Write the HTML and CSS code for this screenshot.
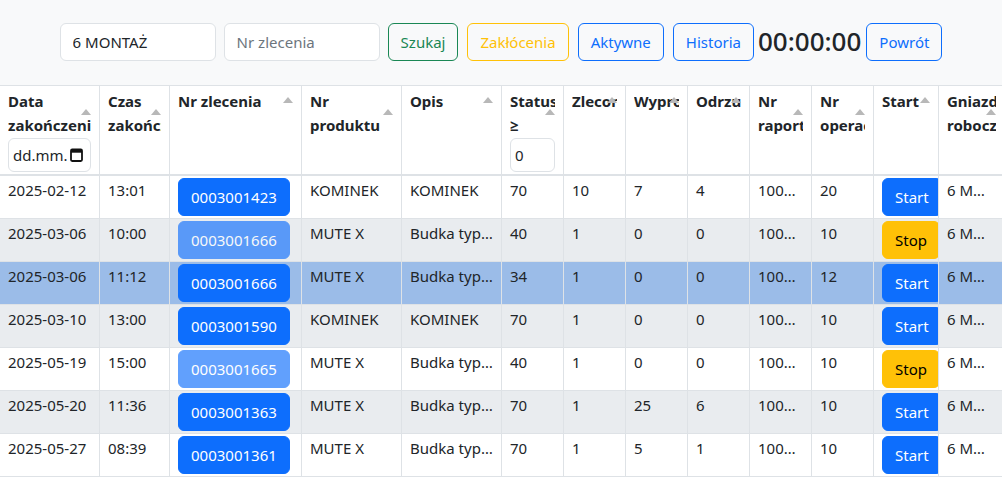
FILE: index.html
```html
<!DOCTYPE html>
<html lang="pl">
<head>
<meta charset="utf-8">
<title>Zlecenia</title>
<link rel="stylesheet" href="styles.css">
</head>
<body>
<div class="toolbar">
  <input class="field" type="text" value="6 MONTAŻ">
  <input class="field" type="text" placeholder="Nr zlecenia">
  <button class="btn btn-outline-success">Szukaj</button>
  <button class="btn btn-outline-warning">Zakłócenia</button>
  <button class="btn btn-outline-primary">Aktywne</button>
  <button class="btn btn-outline-primary">Historia</button>
  <h3 class="timer">00:00:00</h3>
  <button class="btn btn-outline-primary">Powrót</button>
</div>
<div class="table-wrap">
<table class="orders">
  <colgroup>
    <col class="w100"><col class="w70"><col class="w132"><col class="w100"><col class="w100">
    <col class="w62"><col class="w62"><col class="w62"><col class="w62"><col class="w62"><col class="w62">
    <col class="w65"><col class="w66">
  </colgroup>
  <thead>
    <tr>
      <th><div class="th-head"><div class="th-label">Data zakończenia</div><span class="sort"></span></div>
        <div class="hdr-input date-input"><span class="date-text">dd.mm.rrrr</span><svg class="cal" width="13" height="14" viewBox="0 0 13 14"><rect x="1" y="1.5" width="11" height="11.5" rx="1.2" fill="none" stroke="#111" stroke-width="1.8"/><rect x="1" y="1.5" width="11" height="3.2" fill="#111"/></svg></div></th>
      <th><div class="th-head"><div class="th-label">Czas zakończenia</div><span class="sort"></span></div></th>
      <th><div class="th-head"><div class="th-label">Nr zlecenia</div><span class="sort"></span></div></th>
      <th><div class="th-head"><div class="th-label">Nr produktu</div><span class="sort"></span></div></th>
      <th><div class="th-head"><div class="th-label">Opis</div><span class="sort"></span></div></th>
      <th><div class="th-head"><div class="th-label">Status ≥</div><span class="sort"></span></div>
        <input class="hdr-input" type="text" value="0"></th>
      <th><div class="th-head"><div class="th-label">Zlecone</div><span class="sort"></span></div></th>
      <th><div class="th-head"><div class="th-label">Wyprodukowane</div><span class="sort"></span></div></th>
      <th><div class="th-head"><div class="th-label">Odrzucone</div><span class="sort"></span></div></th>
      <th><div class="th-head"><div class="th-label">Nr raportu</div><span class="sort"></span></div></th>
      <th><div class="th-head"><div class="th-label">Nr operacji</div><span class="sort"></span></div></th>
      <th><div class="th-head"><div class="th-label">Start</div><span class="sort"></span></div></th>
      <th><div class="th-head"><div class="th-label">Gniazdo robocze</div><span class="sort"></span></div></th>
    </tr>
  </thead>
  <tbody>
    <tr>
      <td>2025-02-12</td><td>13:01</td><td><button class="tbtn tbtn-primary">0003001423</button></td>
      <td>KOMINEK</td><td>KOMINEK</td><td>70</td><td>10</td><td>7</td><td>4</td><td>1000234511</td><td>20</td>
      <td><button class="tbtn tbtn-primary">Start</button></td><td>6 MONTAŻ</td>
    </tr>
    <tr>
      <td>2025-03-06</td><td>10:00</td><td><button class="tbtn tbtn-primary is-disabled">0003001666</button></td>
      <td>MUTE X</td><td>Budka typowa MUTE X</td><td>40</td><td>1</td><td>0</td><td>0</td><td>1000234588</td><td>10</td>
      <td><button class="tbtn tbtn-warning">Stop</button></td><td>6 MONTAŻ</td>
    </tr>
    <tr class="selected">
      <td>2025-03-06</td><td>11:12</td><td><button class="tbtn tbtn-primary">0003001666</button></td>
      <td>MUTE X</td><td>Budka typowa MUTE X</td><td>34</td><td>1</td><td>0</td><td>0</td><td>1000234590</td><td>12</td>
      <td><button class="tbtn tbtn-primary">Start</button></td><td>6 MONTAŻ</td>
    </tr>
    <tr>
      <td>2025-03-10</td><td>13:00</td><td><button class="tbtn tbtn-primary">0003001590</button></td>
      <td>KOMINEK</td><td>KOMINEK</td><td>70</td><td>1</td><td>0</td><td>0</td><td>1000234602</td><td>10</td>
      <td><button class="tbtn tbtn-primary">Start</button></td><td>6 MONTAŻ</td>
    </tr>
    <tr>
      <td>2025-05-19</td><td>15:00</td><td><button class="tbtn tbtn-primary is-disabled">0003001665</button></td>
      <td>MUTE X</td><td>Budka typowa MUTE X</td><td>40</td><td>1</td><td>0</td><td>0</td><td>1000234710</td><td>10</td>
      <td><button class="tbtn tbtn-warning">Stop</button></td><td>6 MONTAŻ</td>
    </tr>
    <tr>
      <td>2025-05-20</td><td>11:36</td><td><button class="tbtn tbtn-primary">0003001363</button></td>
      <td>MUTE X</td><td>Budka typowa MUTE X</td><td>70</td><td>1</td><td>25</td><td>6</td><td>1000234733</td><td>10</td>
      <td><button class="tbtn tbtn-primary">Start</button></td><td>6 MONTAŻ</td>
    </tr>
    <tr>
      <td>2025-05-27</td><td>08:39</td><td><button class="tbtn tbtn-primary">0003001361</button></td>
      <td>MUTE X</td><td>Budka typowa MUTE X</td><td>70</td><td>1</td><td>5</td><td>1</td><td>1000234781</td><td>10</td>
      <td><button class="tbtn tbtn-primary">Start</button></td><td>6 MONTAŻ</td>
    </tr>
  </tbody>
</table>
</div>
</body>
</html>
```
FILE: styles.css
```css
html, body {
  margin: 0;
  overflow: hidden;
}
body {
  font-family: "Noto Sans", "Open Sans", sans-serif;
  font-size: 15px;
  line-height: 24px;
  color: #212529;
  background: #fff;
}

/* toolbar */
.toolbar {
  background: #f8f9fa;
  padding: 23px 0 24px;
  display: flex;
  justify-content: center;
  align-items: center;
  gap: 8px;
}
.field {
  width: 156px;
  height: 38px;
  box-sizing: border-box;
  padding: 6px 12px;
  border: 1px solid #dee2e6;
  border-radius: 6px;
  background: #fff;
  font: inherit;
  color: #212529;
  outline: none;
}
.field::placeholder {
  color: #6c757d;
}
.btn {
  font: inherit;
  line-height: 24px;
  padding: 6px 12px;
  border: 1px solid;
  border-radius: 6px;
  background: transparent;
  cursor: pointer;
}
.btn-outline-success { color: #198754; border-color: #198754; }
.btn-outline-warning { color: #ffc107; border-color: #ffc107; margin-left: 1px; }
.btn-outline-primary { color: #0d6efd; border-color: #0d6efd; margin-left: 1px; }
.timer {
  margin: 0 -4px;
  font-size: 26px;
  font-weight: 500;
  line-height: 1.2;
  color: #212529;
}

/* table */
.table-wrap {
  overflow: hidden;
}
.orders {
  table-layout: fixed;
  width: 1005px;
  border-collapse: separate;
  border-spacing: 0;
  border-top: 1px solid #dee2e6;
}
.w100 { width: 100px; }
.w70 { width: 70px; }
.w132 { width: 132px; }
.w62 { width: 62px; }
.w65 { width: 65px; }
.w66 { width: 66px; }

.orders th,
.orders td {
  border-right: 1px solid #dee2e6;
  border-bottom: 1px solid #dee2e6;
  padding: 2px 8px;
  text-align: left;
  vertical-align: top;
  overflow: hidden;
  white-space: nowrap;
  text-overflow: ellipsis;
}
.orders th {
  padding: 3px 8px 2px;
  border-bottom-width: 2px;
  font-weight: 700;
  white-space: normal;
  background: #fff;
}
.th-head {
  position: relative;
}
.th-label {
  overflow: hidden;
}
.sort {
  position: absolute;
  right: 0;
  top: 50%;
  margin-top: -4px;
  width: 0;
  height: 0;
  border-left: 5px solid transparent;
  border-right: 5px solid transparent;
  border-bottom: 6px solid #b8b8b8;
}
.hdr-input {
  display: block;
  width: 100%;
  height: 34px;
  box-sizing: border-box;
  margin-top: 1px;
  padding: 4px;
  border: 1px solid #dee2e6;
  border-radius: 6px;
  background: #fff;
  font: inherit;
  font-weight: 400;
  color: #212529;
  outline: none;
}
.date-input {
  display: flex;
  align-items: center;
}
.date-text {
  flex: 1;
  min-width: 0;
  overflow: hidden;
  white-space: nowrap;
  text-overflow: clip;
}
.cal {
  flex: none;
  margin: 0 3px 0 2px;
}

.orders tbody td {
  background: #fff;
}
.orders tbody tr:nth-child(even) td {
  background: #e9ecef;
}
.orders tbody tr.selected td {
  background: #9bbce8;
}

.tbtn {
  display: inline-block;
  vertical-align: top;
  font: inherit;
  line-height: 24px;
  padding: 6px 12px;
  border: 1px solid transparent;
  border-radius: 6px;
  white-space: nowrap;
  cursor: pointer;
}
.tbtn-primary {
  background: #0d6efd;
  border-color: #0d6efd;
  color: #fff;
}
.tbtn-warning {
  background: #ffc107;
  border-color: #ffc107;
  color: #000;
}
.is-disabled {
  opacity: 0.65;
}
```
